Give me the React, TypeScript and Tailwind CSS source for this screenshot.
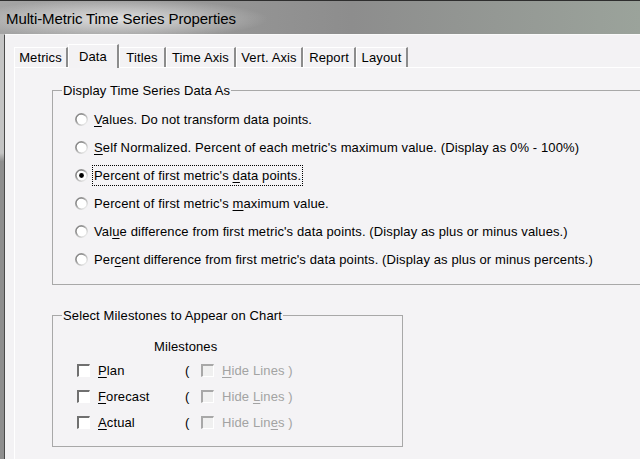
import React from "react";

const tabs = [
  { label: "Metrics", w: "w-[54px]" },
  { label: "Data", w: "w-[51px]", active: true },
  { label: "Titles", w: "w-[47px]" },
  { label: "Time Axis", w: "w-[70px]" },
  { label: "Vert. Axis", w: "w-[67px]" },
  { label: "Report", w: "w-[53px]" },
  { label: "Layout", w: "w-[52px]" },
];

// label split as [before, underlined char, after]
const options: { parts: [string, string, string]; checked?: boolean }[] = [
  { parts: ["", "V", "alues. Do not transform data points."] },
  { parts: ["", "S", "elf Normalized. Percent of each metric's maximum value. (Display as 0% - 100%)"] },
  { parts: ["Percent of first metric's ", "d", "ata points."], checked: true },
  { parts: ["Percent of first metric's ", "m", "aximum value."] },
  { parts: ["Val", "u", "e difference from first metric's data points. (Display as plus or minus values.)"] },
  { parts: ["Per", "c", "ent difference from first metric's data points. (Display as plus or minus percents.)"] },
];

const milestones: { name: [string, string, string]; hide: [string, string, string] }[] = [
  { name: ["", "P", "lan"], hide: ["", "H", "ide Lines )"] },
  { name: ["", "F", "orecast"], hide: ["Hide ", "L", "ines )"] },
  { name: ["", "A", "ctual"], hide: ["Hide Lin", "e", "s )"] },
];

const Mnemonic = ({ parts }: { parts: [string, string, string] }) => (
  <>
    {parts[0]}
    <span className="underline underline-offset-2">{parts[1]}</span>
    {parts[2]}
  </>
);

const Radio = ({ checked }: { checked?: boolean }) => (
  <svg width="13" height="13" viewBox="0 0 13 13" className="shrink-0">
    <defs>
      <linearGradient id="radioRing" x1="0" y1="0" x2="1" y2="1">
        <stop offset="0" stopColor="#8a8a8a" />
        <stop offset="0.55" stopColor="#b8b8b8" />
        <stop offset="1" stopColor="#ffffff" />
      </linearGradient>
    </defs>
    <circle cx="6.5" cy="6.5" r="5.8" fill="#ffffff" stroke="url(#radioRing)" strokeWidth="1.4" />
    <path d="M2.6 9.6 A4.4 4.4 0 0 1 9.6 2.6" fill="none" stroke="#6a6a6a" strokeWidth="1" opacity="0.6" />
    {checked && <circle cx="6.5" cy="6.5" r="2.4" fill="#000" />}
  </svg>
);

const Checkbox = ({ disabled }: { disabled?: boolean }) => (
  <div
    className={`w-[13px] h-[13px] shrink-0 border-t-2 border-l-2 border-b border-r ${
      disabled
        ? "border-t-[#a8a8a8] border-l-[#a8a8a8] border-b-white border-r-white bg-[#f0f0f0]"
        : "border-t-[#707070] border-l-[#707070] border-b-white border-r-white bg-white"
    }`}
  />
);

export default function App() {
  return (
    <div
      className="w-[640px] h-[459px] overflow-hidden flex flex-col bg-[#9a9a9a] text-black text-[13px] leading-[15px] tracking-[0.12px]"
      style={{ fontFamily: '"Liberation Sans", Arial, sans-serif' }}
    >
      {/* Title bar */}
      <div className="h-[34px] shrink-0 flex items-center pl-[6px] border-t border-[#2e2e2e] bg-[radial-gradient(ellipse_150px_20px_at_118px_18px,rgba(235,235,235,0.85),transparent),linear-gradient(to_right,#a4a4a4,#8d8d8d_55%,#9ba39b)]">
        <span className="text-[15px] leading-[18px] pt-[2px] tracking-[-0.1px]">Multi-Metric Time Series Properties</span>
      </div>

      <div className="flex-1 flex min-h-0">
        {/* window frame */}
        <div className="w-[4px] bg-[linear-gradient(to_bottom,#c4c4c4,#c4c4c4_28%,#8e8e8e_30%,#8e8e8e)]" />

        {/* client area */}
        <div className="flex-1 flex flex-col min-w-0 bg-[#f3f2f4] border-l border-[#4a4a4a] border-t border-t-[#fafafa] pt-[8px] pl-[9px]">
          {/* tab strip */}
          <div className="flex items-end h-[24px] shrink-0">
            {tabs.map((t) => (
              <div
                key={t.label}
                className={`${t.w} shrink-0 flex justify-center border-t border-l border-white border-r-2 border-r-[#8c8c8c] ${
                  t.active
                    ? "h-[24px] items-start pt-[4px] bg-[#f3f2f4] -mb-px relative z-10"
                    : "h-[20px] items-center"
                } ${t.label === "Metrics" ? "border-r-0" : ""}`}
              >
                {t.label}
              </div>
            ))}
          </div>

          {/* tab panel */}
          <div className="flex-1 border-t border-l border-white bg-[#f4f3f5] pl-[37px] min-h-0">
            <fieldset className="w-[620px] mt-[15px] border border-[#a8a8a8] pb-[11px]">
              <legend className="ml-[9px] px-[1px]">Display Time Series Data As</legend>
              <div className="pt-[7px] flex flex-col">
                {options.map((o, i) => (
                  <div key={i} className="h-[28px] flex items-center pl-[22px] gap-[4px]">
                    <Radio checked={o.checked} />
                    <span
                      className={`whitespace-nowrap px-[1px] py-[2px] border border-dotted ${
                        o.checked ? "border-black" : "border-transparent"
                      }`}
                    >
                      <Mnemonic parts={o.parts} />
                    </span>
                  </div>
                ))}
              </div>
            </fieldset>

            <fieldset className="w-[351px] mt-[23px] border border-[#a8a8a8] pb-[11px]">
              <legend className="ml-[9px] px-[1px]">Select Milestones to Appear on Chart</legend>
              <div className="pt-[16px] pl-[101px] h-[16px] leading-[16px] box-content">Milestones</div>
              <div className="pt-[2px] flex flex-col">
                {milestones.map((m, i) => (
                  <div key={i} className="h-[26px] flex items-center pl-[24px]">
                    <div className="w-[108px] flex items-center gap-[8px]">
                      <Checkbox />
                      <span>
                        <Mnemonic parts={m.name} />
                      </span>
                    </div>
                    <span className="w-[16px]">(</span>
                    <Checkbox disabled />
                    <span className="ml-[8px] text-[#a3a3a3]">
                      <Mnemonic parts={m.hide} />
                    </span>
                  </div>
                ))}
              </div>
            </fieldset>
          </div>
        </div>
      </div>
    </div>
  );
}
